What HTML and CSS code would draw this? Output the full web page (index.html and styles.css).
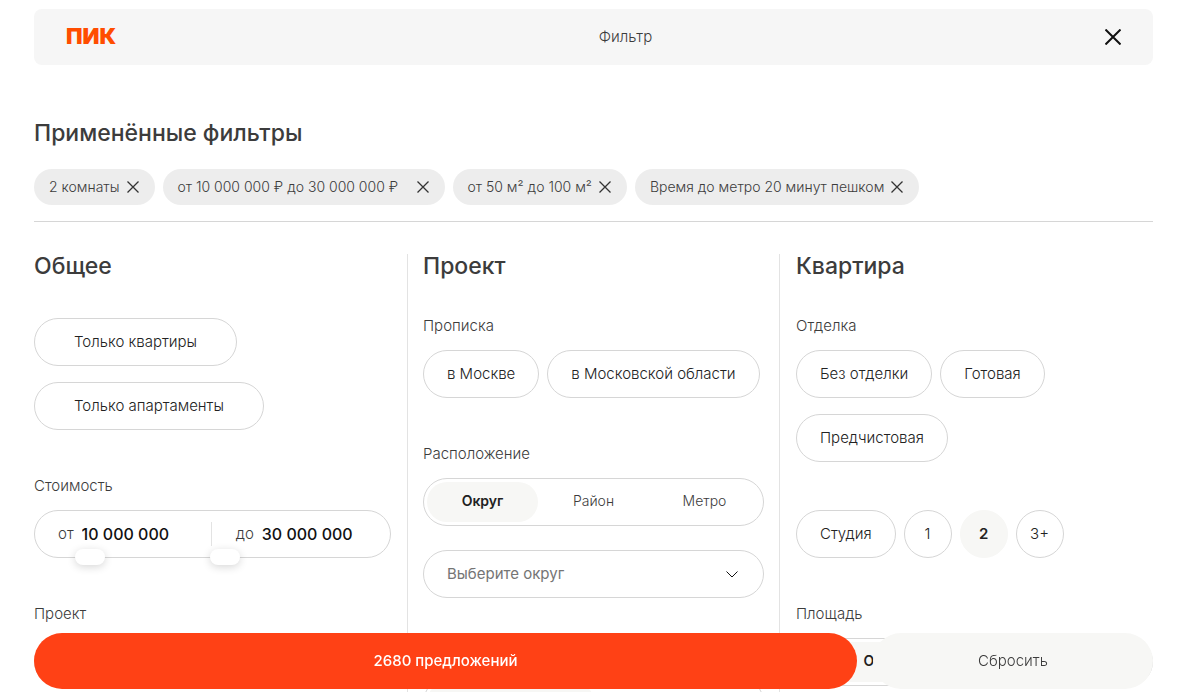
FILE: index.html
```html
<!DOCTYPE html>
<html lang="ru">
<head>
<meta charset="utf-8">
<title>Фильтр</title>
<meta name="viewport" content="width=device-width, initial-scale=1">
<link rel="stylesheet" href="styles.css">
</head>
<body>
<div class="page">
  <header class="header">
    <a class="logo" href="#">ПИК</a>
    <span class="header-title">Фильтр</span>
    <button class="close" type="button" aria-label="Закрыть">
      <svg width="16" height="16" viewBox="0 0 16 16" fill="none" stroke="currentColor" stroke-width="2"><path d="M.5.5l15 15M15.5.5l-15 15"/></svg>
    </button>
  </header>

  <section class="applied">
    <h2 class="heading">Применённые фильтры</h2>
    <div class="chips">
      <button class="chip" type="button">2 комнаты <svg class="chip-x" viewBox="0 0 12 12"><path d="M.5.5l11 11M11.5.5l-11 11"/></svg></button>
      <button class="chip chip-price" type="button">от 10 000 000 ₽ до 30 000 000 ₽ <svg class="chip-x" viewBox="0 0 12 12"><path d="M.5.5l11 11M11.5.5l-11 11"/></svg></button>
      <button class="chip" type="button">от 50 м² до 100 м² <svg class="chip-x" viewBox="0 0 12 12"><path d="M.5.5l11 11M11.5.5l-11 11"/></svg></button>
      <button class="chip" type="button">Время до метро 20 минут пешком <svg class="chip-x" viewBox="0 0 12 12"><path d="M.5.5l11 11M11.5.5l-11 11"/></svg></button>
    </div>
  </section>

  <main class="columns">
    <section class="column">
      <h2 class="heading">Общее</h2>
      <div class="group group-first pills pills-stacked">
        <button class="pill pill-wide" type="button">Только квартиры</button>
        <button class="pill pill-wide" type="button">Только апартаменты</button>
      </div>
      <div class="group">
        <span class="label">Стоимость</span>
        <div class="range">
          <label class="range-part">от <input class="range-value" type="text" value="10 000 000"></label>
          <label class="range-part range-part-to">до <input class="range-value" type="text" value="30 000 000"></label>
          <input class="slider" type="range" min="0" max="100" step="0.5" value="6" aria-label="Минимальная стоимость">
          <input class="slider" type="range" min="0" max="100" step="0.5" value="54.5" aria-label="Максимальная стоимость">
        </div>
      </div>
      <div class="group">
        <label class="label" for="project">Проект</label>
        <div class="select-box">
          <select class="select" id="project"></select>
        </div>
      </div>
    </section>

    <section class="column column-middle">
      <h2 class="heading">Проект</h2>
      <div class="group group-first-labelled">
        <span class="label">Прописка</span>
        <div class="pills">
          <button class="pill" type="button">в Москве</button>
          <button class="pill" type="button">в Московской области</button>
        </div>
      </div>
      <div class="group">
        <span class="label">Расположение</span>
        <div class="segments">
          <button class="segment segment-active" type="button">Округ</button>
          <button class="segment" type="button">Район</button>
          <button class="segment" type="button">Метро</button>
        </div>
        <div class="select-box select-after">
          <select class="select" aria-label="Округ"><option>Выберите округ</option></select>
          <svg class="chevron" viewBox="0 0 12 7"><path d="M.5.5L6 6 11.5.5"/></svg>
        </div>
      </div>
      <div class="group">
        <span class="label">Срок</span>
        <div class="segments">
          <button class="segment segment-active" type="button">Заселение</button>
          <button class="segment" type="button">Ключи</button>
        </div>
      </div>
    </section>

    <section class="column column-last">
      <h2 class="heading">Квартира</h2>
      <div class="group group-first-labelled">
        <span class="label">Отделка</span>
        <div class="pills">
          <button class="pill" type="button">Без отделки</button>
          <button class="pill" type="button">Готовая</button>
          <button class="pill" type="button">Предчистовая</button>
        </div>
      </div>
      <div class="group group-rooms pills">
        <button class="pill" type="button">Студия</button>
        <button class="pill pill-round" type="button">1</button>
        <button class="pill pill-round pill-active" type="button">2</button>
        <button class="pill pill-round" type="button">3+</button>
      </div>
      <div class="group">
        <span class="label">Площадь</span>
        <div class="segments">
          <button class="segment segment-active" type="button">Общая</button>
          <button class="segment" type="button">Кухни</button>
        </div>
      </div>
    </section>
  </main>
</div>

<div class="actions">
  <button class="action action-show" type="button">2680 предложений</button>
  <button class="action action-reset" type="button">Сбросить</button>
</div>
</body>
</html>
```
FILE: styles.css
```css
* { box-sizing: border-box; }

body {
  margin: 0;
  background: #fff;
  color: #3c3c3c;
  font-family: Inter, "Liberation Sans", sans-serif;
  font-size: 15px;
  font-weight: 300;
  line-height: 24px;
}

button, input, select {
  margin: 0;
  padding: 0;
  border: 0;
  background: none;
  color: inherit;
  font: inherit;
}

button { cursor: pointer; }

.page { padding: 9px 35px 24px 34px; }

.header {
  display: flex;
  align-items: center;
  height: 56px;
  padding: 0 24px 0 32px;
  border-radius: 8px;
  background: #f6f6f6;
}

.logo {
  width: 88px;
  padding-bottom: 2px;
  color: #ff4d00;
  font-size: 22px;
  font-weight: 900;
  text-decoration: none;
}

.header-title { flex: 1; text-align: center; }

.close {
  display: grid;
  place-items: center;
  width: 32px;
  height: 32px;
  color: #111;
}

.heading {
  margin: 0;
  font-size: 23px;
  font-weight: 500;
  line-height: 24px;
}

.applied {
  padding: 56px 0 16px;
  border-bottom: 1px solid #d6d6d6;
}

.chips {
  display: flex;
  flex-wrap: wrap;
  gap: 8px;
  margin-top: 24px;
}

.chip {
  display: flex;
  align-items: center;
  justify-content: space-between;
  gap: 7px;
  height: 36px;
  padding: 0 16px 0 15px;
  border-radius: 18px;
  background: #ededed;
  font-size: 14px;
}

.chip-price { min-width: 282px; }

.chip-x {
  width: 12px;
  height: 12px;
  fill: none;
  stroke: #333;
  stroke-width: 1.3;
}

.columns {
  display: grid;
  grid-template-columns: repeat(3, minmax(0, 1fr));
  margin-top: 32px;
}

.column { padding-right: 16px; }

.column-middle {
  padding: 0 15px;
  border: solid #e3e3e3;
  border-width: 0 1px;
}

.column-last { padding: 0 0 0 16px; }

.group { margin-top: 44px; }
.group-first { margin-top: 40px; }
.group-first-labelled { margin-top: 36px; }
.group-rooms { margin-top: 48px; }

.label {
  display: block;
  margin-bottom: 12px;
}

.pills {
  display: flex;
  flex-wrap: wrap;
  gap: 16px 8px;
}

.pills-stacked {
  flex-direction: column;
  align-items: flex-start;
}

.pill {
  height: 48px;
  padding: 0 23px;
  border: 1px solid #d6d6d6;
  border-radius: 24px;
  color: #222;
}

.pill-wide { padding: 0 39px; }

.pill-round {
  width: 48px;
  padding: 0;
}

.pill-active {
  border-color: #f7f7f5;
  background: #f7f7f5;
  font-weight: 600;
}

.range {
  position: relative;
  display: grid;
  grid-template-columns: 99fr 101fr;
  align-items: center;
  height: 48px;
  border: 1px solid #d6d6d6;
  border-radius: 24px;
}

.range-part {
  display: flex;
  gap: 8px;
  padding-left: 23px;
}

.range-part-to {
  padding-left: 24px;
  border-left: 1px solid #e3e3e3;
}

.range-value {
  width: 100px;
  min-width: 0;
  color: #111;
  font-size: 16px;
  font-weight: 500;
}

.slider {
  position: absolute;
  right: 23px;
  bottom: -8px;
  left: 23px;
  height: 16px;
  appearance: none;
  pointer-events: none;
}

.slider::-webkit-slider-thumb {
  width: 30px;
  height: 16px;
  border-radius: 8px;
  background: #fff;
  box-shadow: 0 2px 8px rgba(0, 0, 0, 0.16);
  appearance: none;
  pointer-events: auto;
}

.segments {
  display: flex;
  height: 48px;
  padding: 3px;
  border: 1px solid #d6d6d6;
  border-radius: 24px;
}

.segment {
  flex: 1;
  padding-bottom: 2px;
  border-radius: 20px;
  font-size: 14px;
}

.segment-active {
  background: #f7f7f5;
  color: #222;
  font-weight: 600;
}

.select-box { position: relative; }
.select-after { margin-top: 24px; }

.select {
  width: 100%;
  height: 48px;
  padding: 0 48px 0 23px;
  border: 1px solid #d6d6d6;
  border-radius: 24px;
  color: #757575;
  font-weight: 400;
  appearance: none;
}

.chevron {
  position: absolute;
  top: 21px;
  right: 26px;
  width: 12px;
  height: 7px;
  fill: none;
  stroke: #111;
  pointer-events: none;
}

.actions {
  position: fixed;
  right: 35px;
  bottom: 3px;
  left: 34px;
  display: flex;
  gap: 16px;
}

.action {
  height: 56px;
  border-radius: 28px;
}

.action-show {
  flex: 1;
  background: #ff4115;
  color: #fff;
  font-weight: 500;
}

.action-reset {
  width: 280px;
  background: #f7f7f5;
}
```
